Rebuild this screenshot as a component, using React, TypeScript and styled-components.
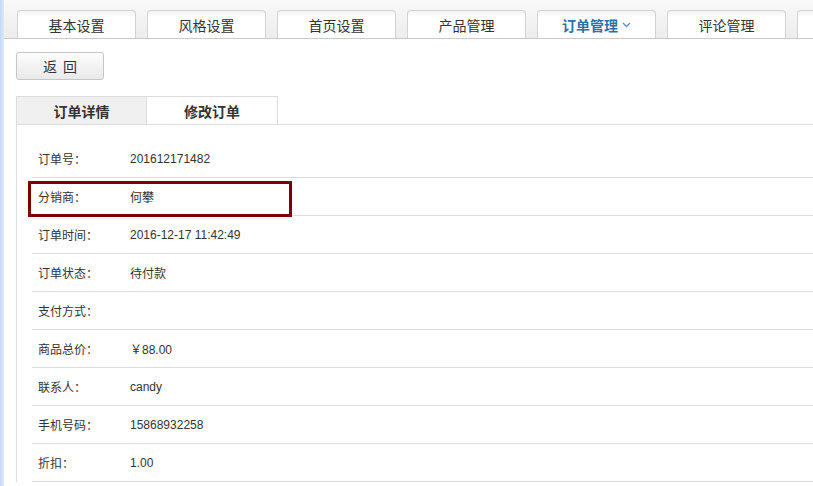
import React from "react";
import styled, { createGlobalStyle } from "styled-components";

const GlobalStyle = createGlobalStyle`
  html, body {
    margin: 0;
    padding: 0;
    background: #fff;
  }
  body {
    font-family: "Liberation Sans", "Noto Sans CJK SC", sans-serif;
    font-size: 12px;
    color: #333;
  }
`;

const Page = styled.div`
  display: flex;
  width: 813px;
  height: 486px;
  overflow: hidden;
`;

const SideStrip = styled.div`
  flex: 0 0 4px;
  background: linear-gradient(to right, #c4daf3, #dbe9f8);
`;

const Main = styled.div`
  flex: 1;
  min-width: 0;
  overflow: hidden;
`;

const TopBar = styled.div`
  display: flex;
  gap: 11px;
  height: 28px;
  padding: 10px 0 0 13px;
  background: linear-gradient(#f9f9f9, #ededed);
  border-bottom: 1px solid #c9c9c9;
  white-space: nowrap;
`;

const NavTab = styled.div<{ $active?: boolean }>`
  flex: 0 0 119px;
  box-sizing: border-box;
  height: 28px;
  display: flex;
  align-items: center;
  justify-content: center;
  gap: 4px;
  background: linear-gradient(#f4f4f4, #fff 6px);
  border: 1px solid #d2d2d2;
  border-bottom: none;
  border-radius: 4px 4px 0 0;
  font-size: 14px;
  color: ${(p) => (p.$active ? "#2b72a8" : "#333")};
  font-weight: ${(p) => (p.$active ? "bold" : "normal")};
`;

const Chevron = () => (
  <svg width="9" height="6" viewBox="0 0 9 6">
    <path d="M1 1 L4.5 4.5 L8 1" fill="none" stroke="#5a8fc2" strokeWidth="1.3" />
  </svg>
);

const Body = styled.div`
  padding: 13px 0 0 12px;
`;

const BackButton = styled.button`
  display: block;
  width: 88px;
  height: 28px;
  border: 1px solid #c6c6c6;
  border-radius: 3px;
  background: linear-gradient(#fdfdfd, #e9e9e9);
  font-family: inherit;
  font-size: 14px;
  color: #333;
  padding: 0;
  word-spacing: 2px;
`;

const SubTabs = styled.div`
  display: flex;
  margin-top: 16px;
`;

const SubTab = styled.div<{ $current?: boolean }>`
  width: 131px;
  height: 28px;
  box-sizing: border-box;
  display: flex;
  align-items: center;
  justify-content: center;
  border: 1px solid #dcdcdc;
  border-bottom: none;
  border-left: ${(p) => (p.$current ? "1px solid #dcdcdc" : "none")};
  background: ${(p) => (p.$current ? "#f0f0f0" : "#fff")};
  font-size: 14px;
  font-weight: bold;
  color: #333;
`;

const DetailBox = styled.div`
  border-top: 1px solid #dcdcdc;
  border-left: 1px solid #dcdcdc;
  padding: 15px 0 0 15px;
`;

const Row = styled.div`
  position: relative;
  display: flex;
  align-items: center;
  height: 37px;
  border-bottom: 1px solid #dcdcdc;
`;

const Label = styled.span`
  width: 92px;
  padding-left: 6px;
  flex: 0 0 auto;
`;

const Value = styled.span``;

const Highlight = styled.div`
  position: absolute;
  left: -4px;
  top: 3px;
  width: 264px;
  height: 36px;
  box-sizing: border-box;
  border: 3px solid #7f0000;
  pointer-events: none;
`;

const navItems = ["基本设置", "风格设置", "首页设置", "产品管理", "订单管理", "评论管理", ""];

const rows = [
  { label: "订单号：", value: "201612171482" },
  { label: "分销商：", value: "何攀", mark: true },
  { label: "订单时间：", value: "2016-12-17 11:42:49" },
  { label: "订单状态：", value: "待付款" },
  { label: "支付方式：", value: "" },
  { label: "商品总价：", value: "￥88.00" },
  { label: "联系人：", value: "candy" },
  { label: "手机号码：", value: "15868932258" },
  { label: "折扣：", value: "1.00" },
];

const App = () => {
  return (
    <>
      <GlobalStyle />
      <Page>
        <SideStrip />
        <Main>
          <TopBar>
            {navItems.map((name, i) => (
              <NavTab key={i} $active={name === "订单管理"}>
                {name}
                {name === "订单管理" && <Chevron />}
              </NavTab>
            ))}
          </TopBar>
          <Body>
            <BackButton>返 回</BackButton>
            <SubTabs>
              <SubTab $current>订单详情</SubTab>
              <SubTab>修改订单</SubTab>
            </SubTabs>
            <DetailBox>
              {rows.map((r) => (
                <Row key={r.label}>
                  <Label>{r.label}</Label>
                  <Value>{r.value}</Value>
                  {r.mark && <Highlight />}
                </Row>
              ))}
            </DetailBox>
          </Body>
        </Main>
      </Page>
    </>
  );
};

export default App;
